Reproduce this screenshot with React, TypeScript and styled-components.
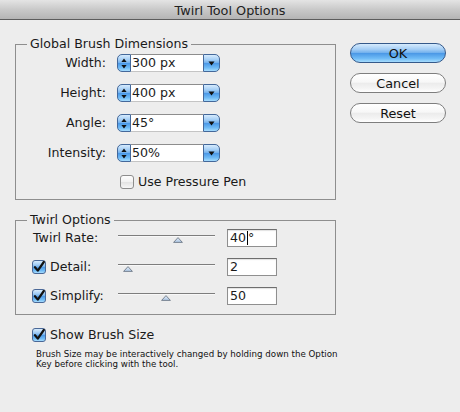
import React from "react";
import styled, { createGlobalStyle } from "styled-components";

const Global = createGlobalStyle`
  html, body { margin: 0; padding: 0; }
  body { width: 460px; height: 412px; overflow: hidden; background: #ededed;
    font-family: "DejaVu Sans", "Liberation Sans", sans-serif; color: #1a1a1a; }
  * { box-sizing: border-box; }
`;

const Window = styled.div`
  width: 460px;
  height: 412px;
  background: #ededed;
  display: flex;
  flex-direction: column;
`;

const TitleBar = styled.div`
  height: 20px;
  background: linear-gradient(#e4e4e4, #c9c9c9 50%, #b4b4b4);
  border-bottom: 1px solid #5c5c5c;
  display: flex;
  align-items: center;
  justify-content: center;
  font-size: 12.8px;
  color: #222;
  padding-top: 1px;
`;

const Content = styled.div`
  display: flex;
  padding: 16px 0 0 15px;
`;

const LeftCol = styled.div`
  width: 321px;
  display: flex;
  flex-direction: column;
`;

const Group = styled.fieldset<{ $pb: number }>`
  margin: 0;
  padding: 0 0 ${(p) => p.$pb}px 0;
  border: 1px solid #8e8e8e;
  min-width: 0;
  & + & { margin-top: 12px; }
`;

const Legend = styled.legend`
  margin-left: 11px;
  padding: 0 3px;
  font-size: 12.6px;
  line-height: 16px;
  color: #1a1a1a;
`;

const DimRows = styled.div`
  display: grid;
  grid-template-columns: 90px 103px;
  column-gap: 11px;
  row-gap: 12px;
  align-items: center;
  padding-top: 2px;
`;

const RowLabel = styled.div`
  text-align: right;
  font-size: 12.6px;
  line-height: 18px;
`;

const Combo = styled.div`
  display: flex;
  height: 18px;
  width: 103px;
`;

const Aqua = `linear-gradient(#d6ebfd 0%, #a3cdf5 30%, #6eaeec 50%, #4b98e6 52%, #6fbbf6 80%, #a6dcfd 100%)`;

const SpinPart = styled.div`
  width: 14px;
  background: ${Aqua};
  border: 1px solid #44689a;
  border-radius: 5px 0 0 5px;
  display: flex;
  align-items: center;
  justify-content: center;
`;

const FieldPart = styled.div`
  flex: 1;
  background: #fff;
  border-top: 1px solid #8d8d8d;
  border-bottom: 1px solid #c4c4c4;
  font-size: 12.6px;
  line-height: 15px;
  padding-left: 1px;
`;

const DropPart = styled.div`
  width: 17px;
  background: ${Aqua};
  border: 1px solid #44689a;
  border-radius: 0 5px 5px 0;
  display: flex;
  align-items: center;
  justify-content: center;
`;

const CheckRow = styled.label`
  display: flex;
  align-items: center;
  gap: 4px;
  font-size: 12.6px;
  line-height: 16px;
  white-space: nowrap;
`;

const Box = styled.span<{ $on: boolean }>`
  width: 14px;
  height: 14px;
  border-radius: 3px;
  border: 1px solid ${(p) => (p.$on ? "#4a6897" : "#8d8d8d")};
  background: ${(p) =>
    p.$on
      ? Aqua
      : "linear-gradient(#fdfdfd, #f1f1f1 50%, #e3e3e3 52%, #f7f7f7)"};
  display: flex;
  align-items: center;
  justify-content: center;
  flex: none;
`;

const PenRow = styled.div`
  grid-column: 2 / 3;
  margin-top: 0px;
  margin-left: 3px;
`;

const TwirlRows = styled.div`
  display: grid;
  grid-template-columns: 74px 97px 50px;
  column-gap: 12px;
  row-gap: 11px;
  align-items: center;
  padding: 1px 0 0 16px;
`;

const TwirlLabel = styled.div<{ $indent?: number }>`
  font-size: 12.6px;
  line-height: 18px;
  padding-left: ${(p) => p.$indent ?? 0}px;
  white-space: nowrap;
`;

const Slider = styled.div`
  position: relative;
  height: 18px;
`;

const Track = styled.div`
  position: absolute;
  left: 0;
  right: 0;
  top: 6px;
  height: 2px;
  border-top: 1px solid #7d7d7d;
  border-bottom: 1px solid #f8f8f8;
`;

const Thumb = styled.svg`
  position: absolute;
  top: 8px;
  width: 10px;
  height: 6px;
  margin-left: -5px;
`;

const NumField = styled.div`
  width: 50px;
  height: 18px;
  background: #fff;
  border: 1px solid #8f8f8f;
  border-top-color: #6e6e6e;
  box-shadow: inset 0 1px 1px rgba(0, 0, 0, 0.12);
  font-size: 12.6px;
  line-height: 16px;
  padding-left: 2px;
  display: flex;
  align-items: center;
`;

const Caret = styled.span`
  display: inline-block;
  width: 1px;
  height: 14px;
  background: #000;
  margin: 0 0 0 1px;
`;

const ShowRow = styled.div`
  margin-top: 12px;
  margin-left: 17px;
`;

const Help = styled.div`
  margin: 6px 0 0 21px;
  font-size: 8.7px;
  line-height: 10px;
  color: #111;
  white-space: nowrap;
`;

const ButtonCol = styled.div`
  display: flex;
  flex-direction: column;
  gap: 10px;
  margin-left: 14px;
  padding-top: 7px;
`;

const Button = styled.div<{ $primary?: boolean }>`
  width: 96px;
  height: 20px;
  border-radius: 10px;
  border: 1px solid ${(p) => (p.$primary ? "#35598a" : "#7e7e7e")};
  background: ${(p) =>
    p.$primary
      ? Aqua
      : "linear-gradient(#ffffff 0%, #f7f7f7 45%, #ececec 52%, #f4f4f4 80%, #ffffff 100%)"};
  display: flex;
  align-items: center;
  justify-content: center;
  font-size: 12.8px;
  color: #111;
`;

const SpinIcon = () => (
  <svg width="6" height="11" viewBox="0 0 6 11">
    <path d="M3 0.5 L5.6 4 H0.4 Z M3 10.5 L5.6 7 H0.4 Z" fill="#111" />
  </svg>
);

const DropIcon = () => (
  <svg width="7" height="5" viewBox="0 0 7 5">
    <path d="M0.5 0.5 H6.5 L3.5 4.5 Z" fill="#111" />
  </svg>
);

const CheckMark = () => (
  <svg width="12" height="12" viewBox="0 0 12 12">
    <path d="M2 6.2 L4.8 9.6 L10.8 1" fill="none" stroke="#111" strokeWidth="2.2" strokeLinecap="round" strokeLinejoin="round" />
  </svg>
);

const Check = ({ on }: { on: boolean }) => <Box $on={on}>{on && <CheckMark />}</Box>;

const ComboBox = ({ value }: { value: string }) => (
  <Combo>
    <SpinPart><SpinIcon /></SpinPart>
    <FieldPart>{value}</FieldPart>
    <DropPart><DropIcon /></DropPart>
  </Combo>
);

const SliderCtl = ({ pct }: { pct: number }) => (
  <Slider>
    <Track />
    <Thumb style={{ left: `${pct}%` }} viewBox="0 0 10 6">
      <defs>
        <linearGradient id="tg" x1="0" y1="0" x2="0" y2="1">
          <stop offset="0" stopColor="#e8f0fa" />
          <stop offset="1" stopColor="#a9c3e2" />
        </linearGradient>
      </defs>
      <path d="M5 0.6 L9.4 5.4 H0.6 Z" fill="url(#tg)" stroke="#6f7b88" strokeWidth="0.9" strokeLinejoin="round" />
    </Thumb>
  </Slider>
);

const dims = [
  { label: "Width:", value: "300 px" },
  { label: "Height:", value: "400 px" },
  { label: "Angle:", value: "45°" },
  { label: "Intensity:", value: "50%" },
];

export default function App() {
  return (
    <Window>
      <Global />
      <TitleBar>Twirl Tool Options</TitleBar>
      <Content>
        <LeftCol>
          <Group $pb={9}>
            <Legend>Global Brush Dimensions</Legend>
            <DimRows>
              {dims.map((d) => (
                <React.Fragment key={d.label}>
                  <RowLabel>{d.label}</RowLabel>
                  <ComboBox value={d.value} />
                </React.Fragment>
              ))}
              <PenRow>
                <CheckRow>
                  <Check on={false} />
                  Use Pressure Pen
                </CheckRow>
              </PenRow>
            </DimRows>
          </Group>
          <Group $pb={9}>
            <Legend>Twirl Options</Legend>
            <TwirlRows>
              <TwirlLabel $indent={1}>Twirl Rate:</TwirlLabel>
              <SliderCtl pct={62} />
              <NumField>40<Caret />°</NumField>

              <CheckRow>
                <Check on={true} />
                Detail:
              </CheckRow>
              <SliderCtl pct={10} />
              <NumField>2</NumField>

              <CheckRow>
                <Check on={true} />
                Simplify:
              </CheckRow>
              <SliderCtl pct={49} />
              <NumField>50</NumField>
            </TwirlRows>
          </Group>
          <ShowRow>
            <CheckRow>
              <Check on={true} />
              Show Brush Size
            </CheckRow>
          </ShowRow>
          <Help>
            Brush Size may be interactively changed by holding down the Option
            <br />
            Key before clicking with the tool.
          </Help>
        </LeftCol>
        <ButtonCol>
          <Button $primary>OK</Button>
          <Button>Cancel</Button>
          <Button>Reset</Button>
        </ButtonCol>
      </Content>
    </Window>
  );
}
